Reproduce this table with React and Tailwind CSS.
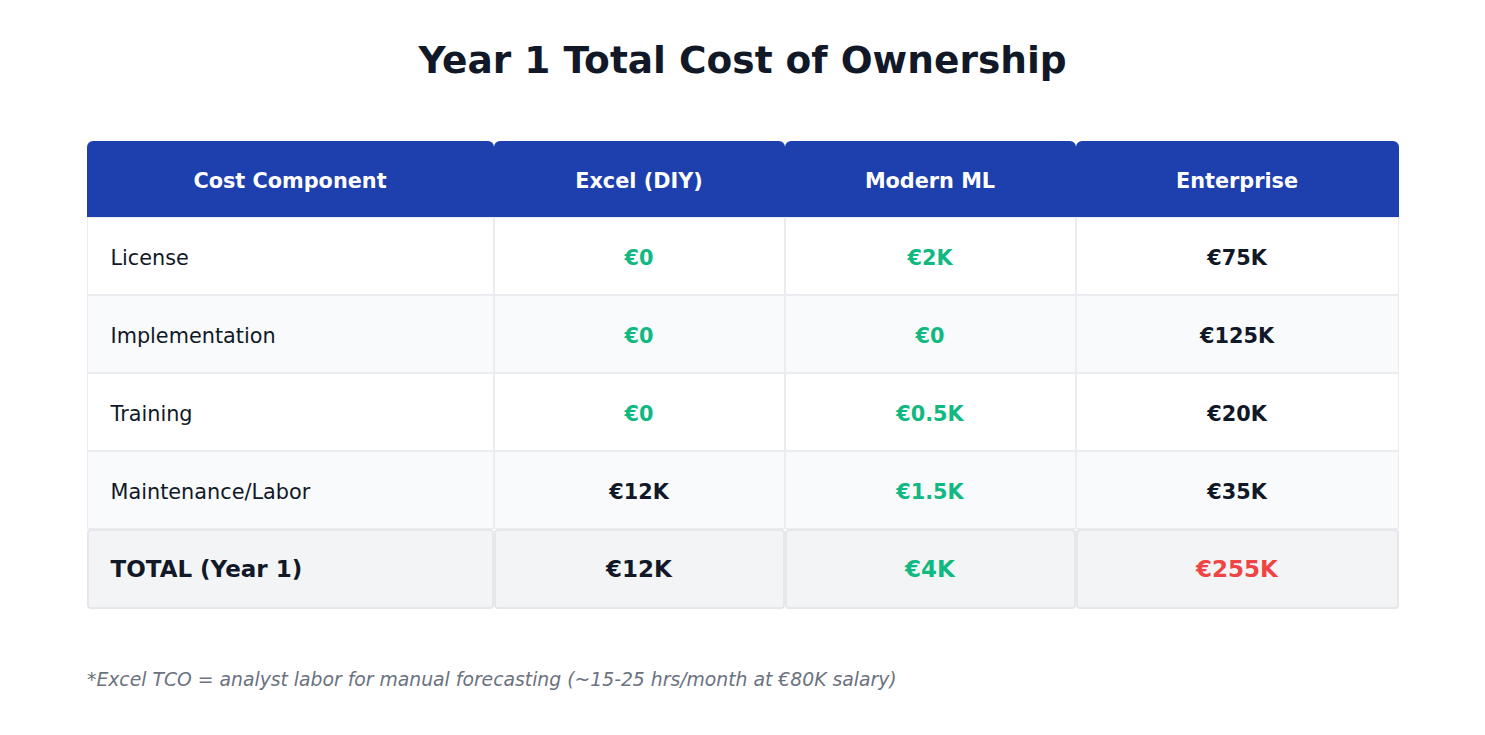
import React from "react";

const rows = [
  { label: "License", vals: [["€0", "g"], ["€2K", "g"], ["€75K", "d"]], bg: "bg-white" },
  { label: "Implementation", vals: [["€0", "g"], ["€0", "g"], ["€125K", "d"]], bg: "bg-[#f9fafb]" },
  { label: "Training", vals: [["€0", "g"], ["€0.5K", "g"], ["€20K", "d"]], bg: "bg-white" },
  { label: "Maintenance/Labor", vals: [["€12K", "d"], ["€1.5K", "g"], ["€35K", "d"]], bg: "bg-[#f9fafb]" },
];

const tone = {
  g: "text-[#10b981]",
  d: "text-[#111827]",
  r: "text-[#ef4444]",
};

const heads = ["Cost Component", "Excel (DIY)", "Modern ML", "Enterprise"];

export default function App() {
  return (
    <div
      className="w-[1485px] h-[735px] bg-white"
      style={{ fontFamily: '"DejaVu Sans", Verdana, sans-serif' }}
    >
      <h1 className="pt-[38px] text-center text-[37.5px] leading-[44px] font-bold text-[#111827]">
        Year 1 Total Cost of Ownership
      </h1>

      <div className="mt-[59px] mx-auto w-[1312px] grid grid-cols-[407px_291px_291px_323px]">
        {heads.map((h) => (
          <div
            key={h}
            className="h-[76px] pt-[6px] flex items-center justify-center bg-[#1e40af] rounded-t-md text-white text-[20.8px] font-bold"
          >
            {h}
          </div>
        ))}

        {rows.map((r) => (
          <React.Fragment key={r.label}>
            <div className={`h-[78px] pt-[6px] flex items-center pl-[23px] border border-[#eaecef] text-[20.8px] text-[#111827] ${r.bg}`}>
              {r.label}
            </div>
            {r.vals.map(([v, t], i) => (
              <div
                key={i}
                className={`h-[78px] pt-[6px] flex items-center justify-center border border-[#eaecef] text-[20.8px] font-bold ${tone[t]} ${r.bg}`}
              >
                {v}
              </div>
            ))}
          </React.Fragment>
        ))}

        <div className="h-[80px] flex items-center pl-[22px] border-2 border-[#e5e7eb] rounded-sm bg-[#f3f4f6] text-[23px] font-bold text-[#111827]">
          TOTAL (Year 1)
        </div>
        {[["€12K", "d"], ["€4K", "g"], ["€255K", "r"]].map(([v, t], i) => (
          <div
            key={i}
            className={`h-[80px] flex items-center justify-center border-2 border-[#e5e7eb] rounded-sm bg-[#f3f4f6] text-[23px] font-bold ${tone[t]}`}
          >
            {v}
          </div>
        ))}
      </div>

      <p className="mt-[57px] ml-[87px] text-[18.8px] italic text-[#6b7280]">
        *Excel TCO = analyst labor for manual forecasting (~15-25 hrs/month at €80K salary)
      </p>
    </div>
  );
}
